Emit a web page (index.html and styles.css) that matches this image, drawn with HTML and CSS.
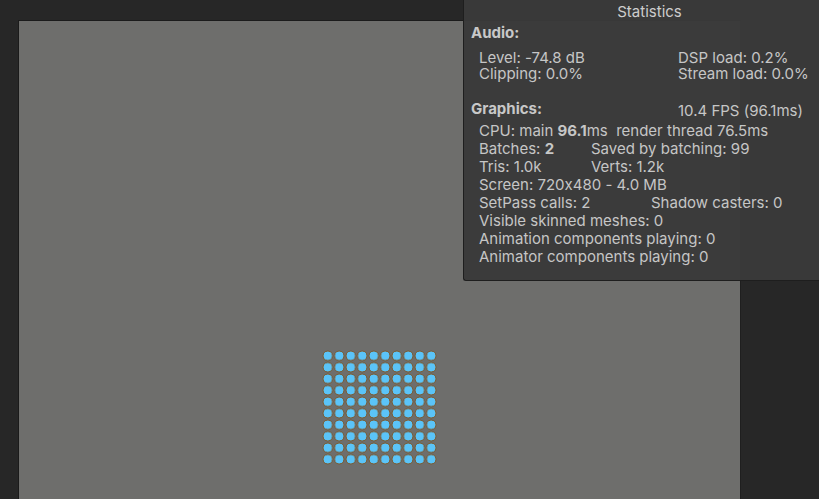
FILE: index.html
```html
<!DOCTYPE html>
<html lang="en">
<head>
  <meta charset="UTF-8">
  <meta name="viewport" content="width=device-width, initial-scale=1.0">
  <title>Game</title>
  <link rel="stylesheet" href="styles.css">
</head>
<body>
  <div class="game-view">
    <div class="dots"></div>
  </div>

  <div class="stats">
    <div class="stats-title">Statistics</div>

    <div class="heading audio-head">Audio:</div>
    <div class="audio-row first">
      <span class="col-audio">Level: -74.8 dB</span>
      <span>DSP load: 0.2%</span>
    </div>
    <div class="audio-row">
      <span class="col-audio">Clipping: 0.0%</span>
      <span>Stream load: 0.0%</span>
    </div>

    <div class="gfx-head">
      <span class="heading col-head">Graphics:</span>
      <span class="fps">10.4 FPS (96.1ms)</span>
    </div>
    <div class="gfx-list">
      <div class="row">CPU: main <b>96.1</b>ms&nbsp; render thread 76.5ms</div>
      <div class="row"><span class="col-a">Batches: <b>2</b></span><span>Saved by batching: 99</span></div>
      <div class="row"><span class="col-a">Tris: 1.0k</span><span>Verts: 1.2k</span></div>
      <div class="row">Screen: 720x480 - 4.0 MB</div>
      <div class="row"><span class="col-b">SetPass calls: 2</span><span>Shadow casters: 0</span></div>
      <div class="row">Visible skinned meshes: 0</div>
      <div class="row">Animation components playing: 0</div>
      <div class="row">Animator components playing: 0</div>
    </div>
  </div>
</body>
</html>
```

FILE: styles.css
```css
html, body {
  margin: 0;
  height: 100%;
  overflow: hidden;
}
body {
  background-color: #272727;
  font-family: Inter, "Noto Sans", sans-serif;
  font-size: 15px;
  font-feature-settings: "calt" 0;
  color: #c6c6c6;
  padding: 20px 0 0 18px;
  box-sizing: border-box;
}
.game-view {
  width: 720px;
  height: 480px;
  background-color: #6e6e6c;
  border-left: 1px solid #1b1b1b;
  border-top: 1px solid #1b1b1b;
  border-right: 1px solid #1f1f1f;
  padding: 1px 0 0 1px;
  box-sizing: content-box;
}
.dots {
  width: 115px;
  height: 115px;
  margin: 328px 0 0 302px;
  background-image: radial-gradient(circle at center, #5bc4f8 0, #5bc4f8 4.1px, #7a5a30 4.5px, #7a5a30 5.1px, transparent 5.5px);
  background-size: 11.5px 11.5px;
}

/* statistics overlay */
.stats {
  position: absolute;
  top: 0;
  left: 463px;
  width: 372px;
  height: 281px;
  box-sizing: border-box;
  background-color: rgba(58, 58, 58, 0.97);
  border-left: 1px solid #1e1e1e;
  border-bottom: 1px solid #1e1e1e;
  border-bottom-left-radius: 3px;
  padding: 3px 0 0 7px;
}
.stats-title {
  line-height: 18px;
  text-align: center;
  padding-right: 7px;
  color: #cdcdcd;
}
.heading {
  font-weight: 700;
  color: #c8c8c8;
}
.audio-head {
  line-height: 18px;
  margin-top: 3px;
}
.audio-row {
  display: flex;
  line-height: 16px;
  padding-left: 8px;
  white-space: pre;
}
.audio-row.first {
  margin-top: 8px;
}
.col-audio {
  width: 199px;
}
.gfx-head {
  display: flex;
  align-items: flex-start;
  height: 18px;
  line-height: 18px;
  margin-top: 18px;
}
.col-head {
  width: 207px;
}
.fps {
  padding-top: 2px;
}
.gfx-list {
  margin-top: 4px;
  padding-left: 8px;
}
.row {
  display: flex;
  line-height: 18px;
  white-space: pre;
}
.row b {
  font-weight: 700;
}
.col-a {
  width: 112px;
}
.col-b {
  width: 172px;
}
```
